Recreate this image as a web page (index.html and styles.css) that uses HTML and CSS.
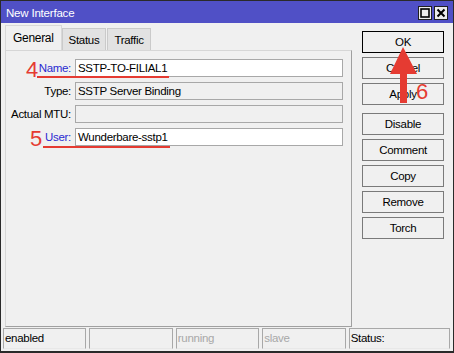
FILE: index.html
```html
<!DOCTYPE html>
<html>
<head>
<meta charset="utf-8">
<link rel="stylesheet" href="styles.css">
</head>
<body>
<div class="window">
  <div class="titlebar">
    <span class="title">New Interface</span>
    <div class="tbtns">
      <span class="tbtn"><svg width="12" height="12" viewBox="0 0 12 12"><rect x="2" y="2" width="8" height="8" fill="none" stroke="#000" stroke-width="1.6"/></svg></span>
      <span class="tbtn"><svg width="12" height="12" viewBox="0 0 12 12"><path d="M2.5 2.5L9.5 9.5M9.5 2.5L2.5 9.5" stroke="#000" stroke-width="2"/></svg></span>
    </div>
  </div>
  <div class="main">
    <div class="left">
      <div class="tabs">
        <div class="tab active">General</div>
        <div class="tab">Status</div>
        <div class="tab">Traffic</div>
      </div>
      <div class="panel">
        <div class="form">
          <label class="lbl link">Name:</label><div class="field white">SSTP-TO-FILIAL1</div>
          <label class="lbl">Type:</label><div class="field">SSTP Server Binding</div>
          <label class="lbl">Actual MTU:</label><div class="field"></div>
          <label class="lbl link">User:</label><div class="field white">Wunderbare-sstp1</div>
        </div>
      </div>
    </div>
    <div class="right">
      <div class="btn default">OK</div>
      <div class="btn">Cancel</div>
      <div class="btn">Apply</div>
      <div class="btn sep">Disable</div>
      <div class="btn">Comment</div>
      <div class="btn">Copy</div>
      <div class="btn">Remove</div>
      <div class="btn">Torch</div>
    </div>
  </div>
  <div class="statusbar">
    <div class="cell">enabled</div>
    <div class="cell"></div>
    <div class="cell dim">running</div>
    <div class="cell dim">slave</div>
    <div class="cell wide">Status:</div>
  </div>

  <div class="note n4">4</div>
  <div class="uline u4"></div>
  <div class="note n5">5</div>
  <div class="uline u5"></div>
  <div class="note n6">6</div>
  <svg class="arrow" width="40" height="60" viewBox="0 0 40 60"><polygon points="17,0 4,27 14,27 14,56 21,56 21,27 31,27" fill="#e53b32"/></svg>
</div>
</body>
</html>
```

FILE: styles.css
```css
* { box-sizing: border-box; }
html, body { margin: 0; padding: 0; background: #fff; }
body { font-family: "Liberation Sans", Arial, sans-serif; font-size: 11px; color: #000; letter-spacing: -0.3px; }

.window {
  position: relative;
  width: 454px;
  height: 353px;
  background: #f0f0f0;
  border: 1px solid #2a2a2a;
  border-bottom-width: 2px;
  display: flex;
  flex-direction: column;
}

.titlebar {
  height: 22px;
  background: #5050c6;
  display: flex;
  align-items: center;
  justify-content: space-between;
  padding: 0 5px 0 5px;
}
.title { color: #fff; font-size: 11.5px; padding-top: 1px; letter-spacing: -0.2px; }
.tbtns { display: flex; gap: 2px; padding-top: 2px; }
.tbtn {
  width: 14px; height: 14px;
  background: #ececec;
  border: 1px solid #202020;
  display: flex; align-items: center; justify-content: center;
}

.main { flex: 1; display: flex; padding: 2px 9px 0 4px; }
.left { width: 347px; display: flex; flex-direction: column; }
.tabs { display: flex; height: 25px; align-items: flex-end; }
.tab {
  height: 22px;
  padding: 0 6px;
  background: #e2e2e2;
  border: 1px solid #cacaca;
  border-bottom: none;
  margin-right: 1px;
  display: flex; align-items: center;
  font-size: 11.5px;
}
.tab.active { height: 25px; background: #f0f0f0; padding: 0 7px; font-size: 12px; border-color: #d8d8d8; margin-right: 0; }
.panel {
  height: 277px;
  border: 1px solid #d6d6d6;
  border-right-color: #a0a0a0;
  border-bottom-color: #a0a0a0;
  padding: 8px 8px 0 0;
}
.form {
  display: grid;
  grid-template-columns: 65px 1fr;
  column-gap: 4px;
  row-gap: 5px;
}
.lbl { text-align: right; height: 18px; line-height: 18px; font-size: 11.5px; }
.lbl.link { color: #2a2ad0; }
.field {
  height: 18px;
  border: 1px solid #a8a8a8;
  background: #f0f0f0;
  padding: 0 2px;
  line-height: 16px;
  font-size: 11.5px;
}
.field.white { background: #fff; }

.right { margin-left: 10px; width: 82px; padding-top: 6px; display: flex; flex-direction: column; gap: 4px; }
.btn {
  height: 22px;
  border: 1px solid #7a7a7a;
  background: #f0f0f0;
  text-align: center;
  line-height: 20px;
  font-size: 11.5px;
}
.btn.default { border-color: #000; }
.btn.sep { margin-top: 4px; }

.statusbar { height: 24px; display: flex; gap: 3px; padding: 1px 3px 2px 2px; }
.cell {
  width: 84px;
  height: 21px;
  border: 1px solid #a8a8a8;
  border-bottom-color: #e8e8e8;
  line-height: 19px;
  padding-left: 1px;
  font-size: 11.5px;
}
.cell.dim { color: #a8a8a8; }
.cell.wide { width: 102px; }

.note {
  position: absolute;
  color: #e53b32;
  font-size: 22px;
  line-height: 22px;
  letter-spacing: 0;
}
.n4 { left: 25px; top: 58px; }
.n5 { left: 29px; top: 127px; }
.n6 { left: 415px; top: 80px; }
.uline { position: absolute; height: 2px; background: #e53b32; }
.u4 { left: 36px; top: 75px; width: 132px; }
.u5 { left: 42px; top: 145px; width: 127px; }
.arrow { position: absolute; left: 385px; top: 46px; }
```
